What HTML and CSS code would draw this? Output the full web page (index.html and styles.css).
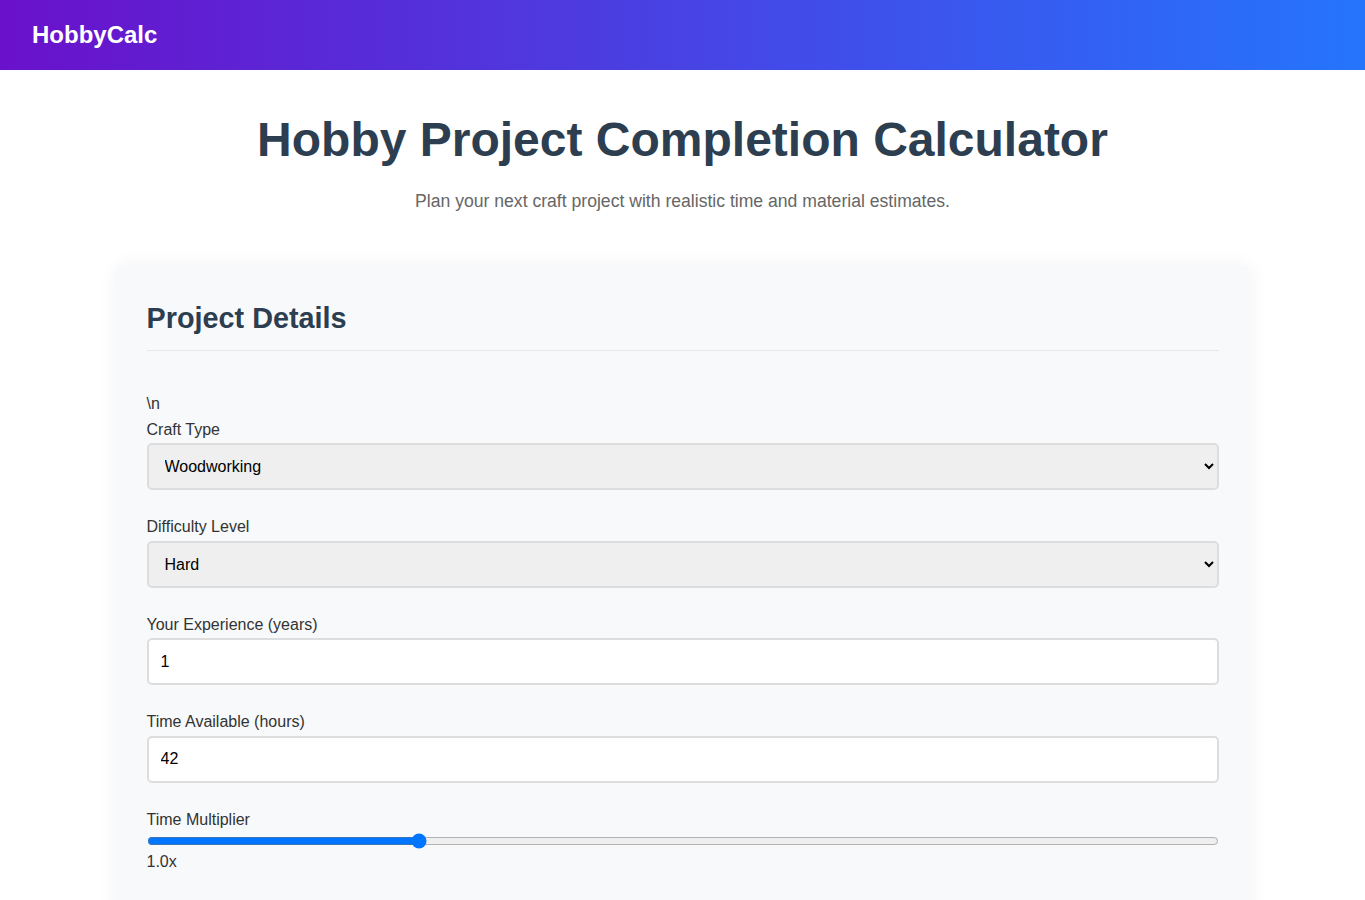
FILE: index.html
```html
<!DOCTYPE html>
<html lang="en">

<head>
  <meta charset="UTF-8" />
  <meta name="viewport" content="width=device-width, initial-scale=1.0" />
  <title>Hobby Project Completion Calculator</title>
  <link rel="stylesheet" href="styles.css">
</head>

<body>
  <header>
    <div class="logo">HobbyCalc</div>
  </header>

  <main>
    <section class="hero">
      <h1>Hobby Project Completion Calculator</h1>
      <p>Plan your next craft project with realistic time and material estimates.</p>
    </section>

    <div class="tarjeta">
      <h2>Project Details</h2>
      <form id="formProyecto">
        \n
        <div class="grupo">
          <label for="tipo">Craft Type</label>
          <select id="tipo">
            <option>Woodworking</option>
            <option>Knitting</option>
            <option>Painting</option>
            <option>Pottery</option>
          </select>
        </div>

        <div class="grupo">
          <label for="dificultad">Difficulty Level</label>
          <select id="dificultad">
            <option>Easy</option>
            <option>Medium</option>
            <option selected>Hard</option>
          </select>
        </div>

        <div class="grupo">
          <label for="experiencia">Your Experience (years)</label>
          <input type="number" id="experiencia" value="1">
        </div>

        <div class="grupo">
          <label for="horas">Time Available (hours)</label>
          <input type="number" id="horas" value="42">
        </div>

        <div class="grupo">
          <label for="multiplicador">Time Multiplier</label>
          <input type="range" id="multiplicador" min="0.5" max="2.5" step="0.1" value="1">
          <span id="valorMultiplicador">1.0x</span>
        </div>
      </form>
    </div>
  </main>

  <script>
    const rango = document.getElementById("multiplicador");
    const valor = document.getElementById("valorMultiplicador");
    rango.addEventListener("input", () => {
      valor.textContent = parseFloat(rango.value).toFixed(1) + "x";
    });
  </script>
</body>

</html>
```

FILE: styles.css
```css
body {
  font-family: "Liberation Sans", Arial, sans-serif;
  margin: 0;
  background-color: #ffffff;
  color: #333;
  line-height: 1.6;
}

header {
  height: 70px;
  padding: 0 32px;
  display: flex;
  align-items: center;
  background: linear-gradient(to right, #6a11cb, #2575fc);
  color: white;
}

.logo {
  font-size: 24px;
  font-weight: bold;
}

.hero {
  text-align: center;
  padding-top: 41px;
}

.hero h1 {
  margin: 0;
  font-size: 48px;
  line-height: 1.2;
  color: #2c3e50;
}

.hero p {
  margin: 18px 0 0;
  font-size: 17.6px;
  color: #666;
}

.tarjeta {
  width: 1136px;
  box-sizing: border-box;
  margin: 50px auto 40px;
  padding: 32px;
  background-color: #f8f9fa;
  border-radius: 10px;
  box-shadow: 0 0 20px rgba(0, 0, 0, 0.05);
}

.tarjeta h2 {
  margin: 0 0 40px;
  padding-bottom: 10px;
  font-size: 28.8px;
  line-height: 1.5;
  color: #2c3e50;
  border-bottom: 1px solid #e6e8eb;
}

.grupo {
  margin-bottom: 24px;
}

.grupo label {
  display: block;
  margin-bottom: 1px;
}

.grupo select,
.grupo input[type="number"] {
  width: 100%;
  height: 47px;
  box-sizing: border-box;
  padding: 0 12px;
  font-family: "Liberation Sans", Arial, sans-serif;
  font-size: 16px;
  color: #000;
  border: 2px solid #ddd;
  border-radius: 5px;
}

.grupo select {
  background-color: #efefef;
}

.grupo input[type="number"] {
  background-color: #fff;
}

.grupo input[type="range"] {
  display: block;
  width: 100%;
  margin: 0;
  height: 16px;
}
```
